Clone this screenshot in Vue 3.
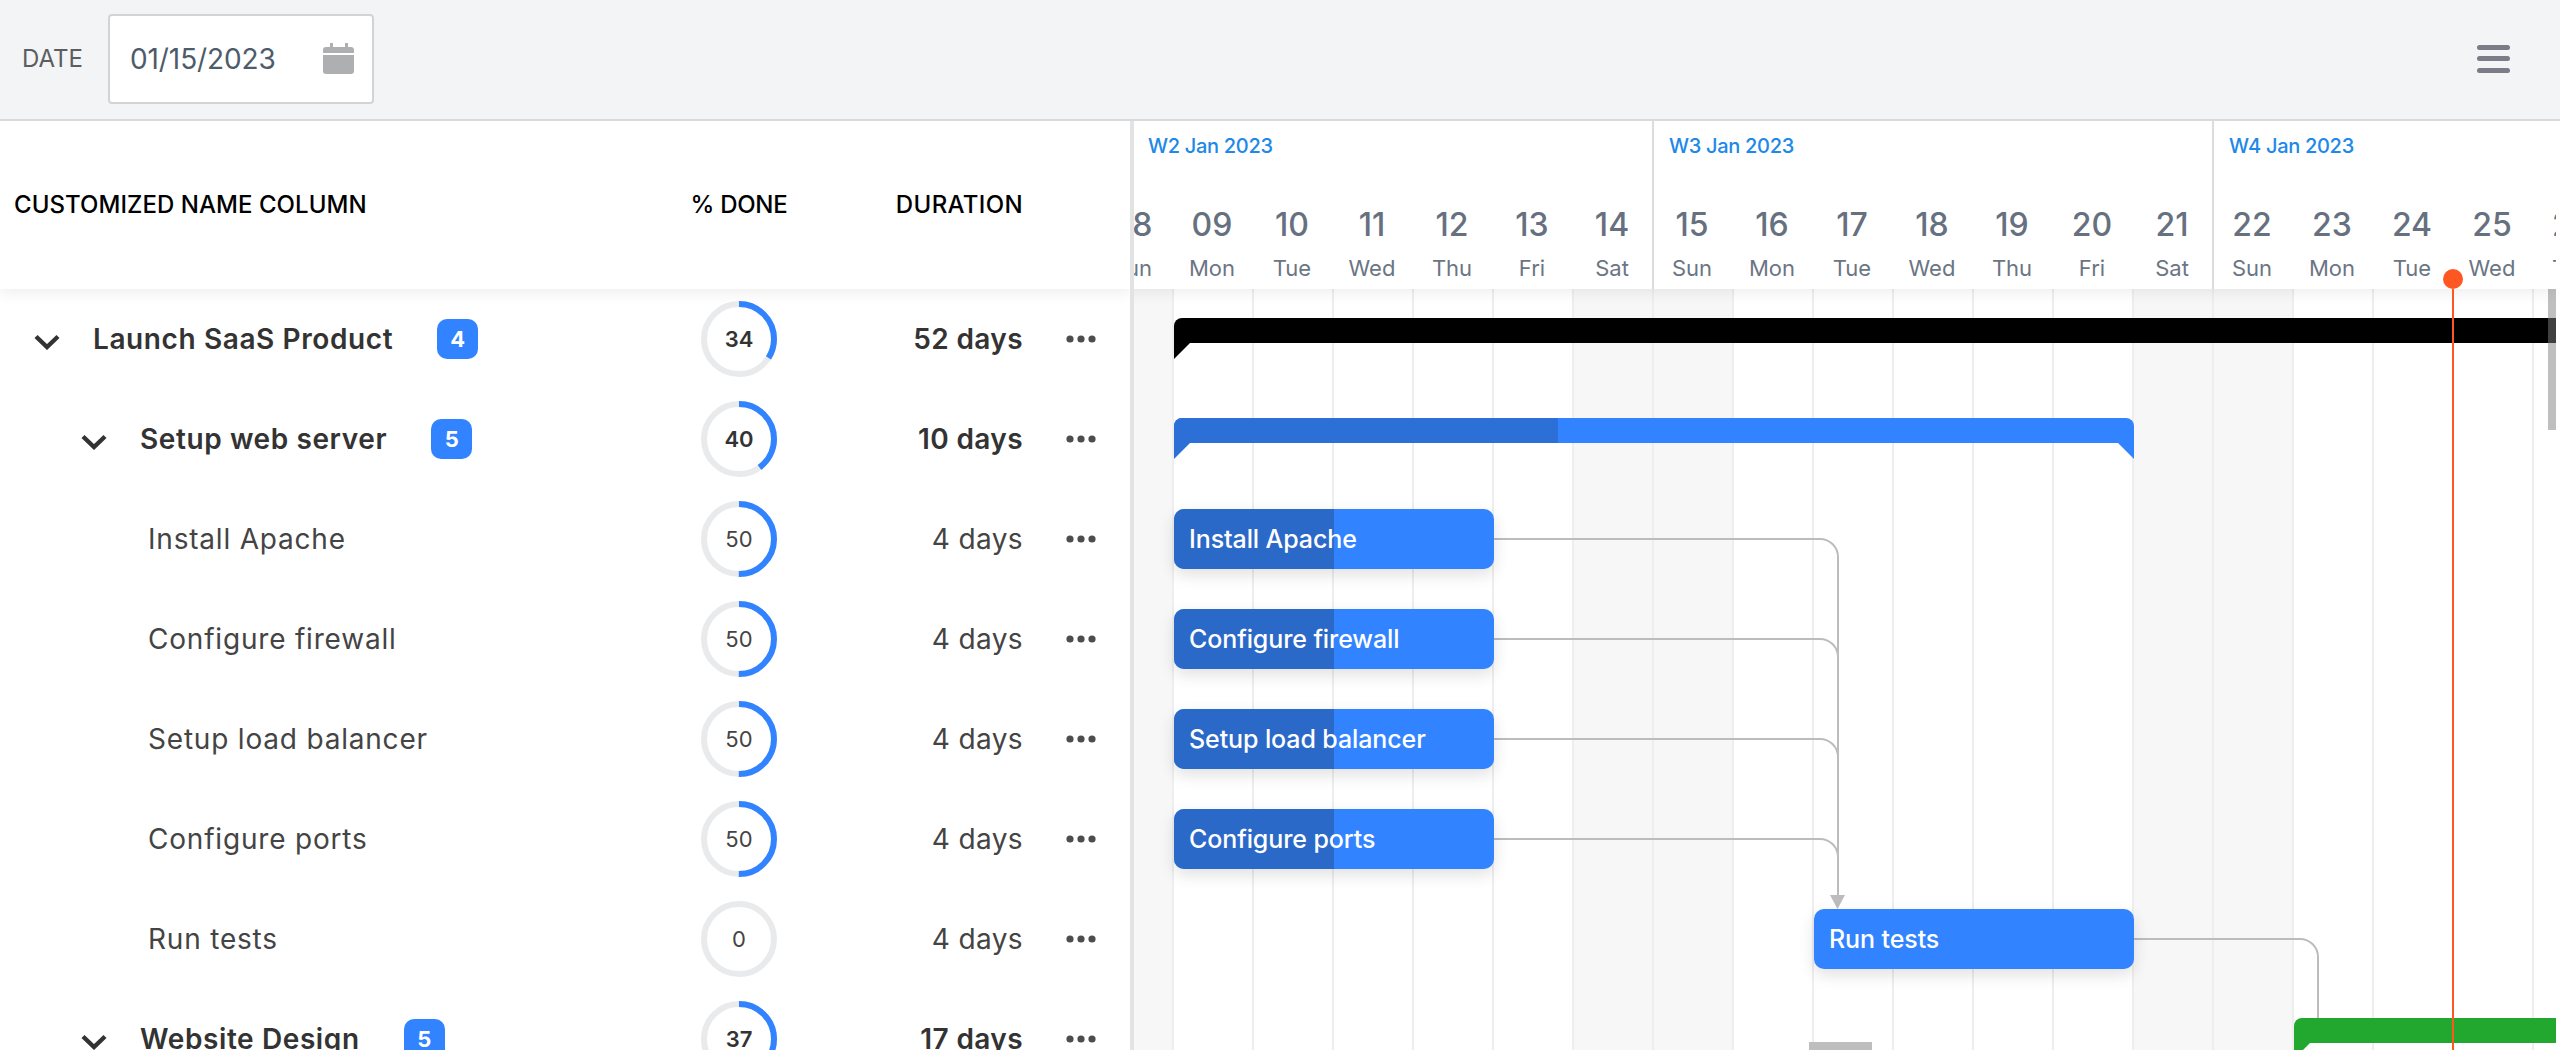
<script setup>
const rows = [
  { name: 'Launch SaaS Product', depth: 0, badge: 4, pct: 34, dur: '52 days' },
  { name: 'Setup web server', depth: 1, badge: 5, pct: 40, dur: '10 days' },
  { name: 'Install Apache', depth: 2, pct: 50, dur: '4 days' },
  { name: 'Configure firewall', depth: 2, pct: 50, dur: '4 days' },
  { name: 'Setup load balancer', depth: 2, pct: 50, dur: '4 days' },
  { name: 'Configure ports', depth: 2, pct: 50, dur: '4 days' },
  { name: 'Run tests', depth: 2, pct: 0, dur: '4 days' },
  { name: 'Website Design', depth: 1, badge: 5, pct: 37, dur: '17 days' }
]
const C = 2 * Math.PI * 35
const dash = (p) => `${(C * p) / 100} ${C}`

const weeks = [
  { label: 'W2 Jan 2023', cls: 'first', days: [['08','Sun'],['09','Mon'],['10','Tue'],['11','Wed'],['12','Thu'],['13','Fri'],['14','Sat']] },
  { label: 'W3 Jan 2023', cls: '', days: [['15','Sun'],['16','Mon'],['17','Tue'],['18','Wed'],['19','Thu'],['20','Fri'],['21','Sat']] },
  { label: 'W4 Jan 2023', cls: 'last', days: [['22','Sun'],['23','Mon'],['24','Tue'],['25','Wed'],['26','Thu']] }
]
const cols = weeks.flatMap((w) => w.days.map((d) => d[1]))

const tasks = [
  { name: 'Install Apache', x: 40, y: 220, w: 320, done: 160 },
  { name: 'Configure firewall', x: 40, y: 320, w: 320, done: 160 },
  { name: 'Setup load balancer', x: 40, y: 420, w: 320, done: 160 },
  { name: 'Configure ports', x: 40, y: 520, w: 320, done: 160 },
  { name: 'Run tests', x: 680, y: 620, w: 320, done: 0 }
]
const links = [
  'M360 250H686A18 18 0 0 1 704 268V606',
  'M360 350H686A18 18 0 0 1 704 368V606',
  'M360 450H686A18 18 0 0 1 704 468V606',
  'M360 550H686A18 18 0 0 1 704 568V606',
  'M1000 650H1166A18 18 0 0 1 1184 668V729'
]
</script>

<template>
  <div class="app">
    <header class="toolbar">
      <span class="date-label">DATE</span>
      <div class="date-input">
        <span class="date-value">01/15/2023</span>
        <svg class="cal" width="31" height="31" viewBox="0 0 31 31">
          <path fill="#aeafb1" d="M7 0h3v4h12V0h3v4h3a3 3 0 0 1 3 3v3H0V7a3 3 0 0 1 3-3h4zM0 12h31v16a3 3 0 0 1-3 3H3a3 3 0 0 1-3-3z" />
        </svg>
      </div>
      <div class="burger"><i></i><i></i><i></i></div>
    </header>

    <div class="main">
      <section class="left">
        <div class="left-head">
          <div class="hname">CUSTOMIZED NAME COLUMN</div>
          <div class="hdone">% DONE</div>
          <div class="hdur">DURATION</div>
        </div>
        <div v-for="r in rows" :key="r.name" class="row" :class="{ parent: r.depth < 2 }">
          <div class="name" :class="'d' + r.depth">
            <svg v-if="r.depth < 2" class="chev" width="26" height="16" viewBox="0 0 26 16">
              <path d="M2 2.5 13 13 24 2.5" fill="none" stroke="#333" stroke-width="4.4" />
            </svg>
            <span class="label">{{ r.name }}</span>
            <span v-if="r.badge" class="badge">{{ r.badge }}</span>
          </div>
          <div class="ring">
            <svg width="76" height="76" viewBox="0 0 76 76">
              <circle cx="38" cy="38" r="35" fill="none" stroke="#e9eaec" stroke-width="6" />
              <circle cx="38" cy="38" r="35" fill="none" stroke="#3183ff" stroke-width="6" :stroke-dasharray="dash(r.pct)" transform="rotate(-90 38 38)" />
            </svg>
            <span class="pct">{{ r.pct }}</span>
          </div>
          <div class="dur">{{ r.dur }}</div>
          <div class="menu">
            <svg width="30" height="10" viewBox="0 0 30 10">
              <circle cx="4" cy="5" r="3.6" fill="#4d4d4d" />
              <circle cx="15" cy="5" r="3.6" fill="#4d4d4d" />
              <circle cx="26" cy="5" r="3.6" fill="#4d4d4d" />
            </svg>
          </div>
        </div>
      </section>

      <div class="splitter"></div>

      <section class="timeline">
        <div class="time-head">
          <div v-for="w in weeks" :key="w.label" class="week" :class="w.cls">
            <div class="week-label">{{ w.label }}</div>
            <div class="days">
              <div v-for="d in w.days" :key="d[0]" class="day">
                <div class="num">{{ d[0] }}</div>
                <div class="dname">{{ d[1] }}</div>
              </div>
            </div>
          </div>
        </div>

        <div class="canvas">
          <div class="grid">
            <div v-for="(c, i) in cols" :key="i" class="col" :class="{ off: c === 'Sun' || c === 'Sat' }"></div>
          </div>

          <svg class="links" width="1422" height="761" viewBox="0 0 1422 761">
            <path v-for="l in links" :key="l" :d="l" fill="none" stroke="#bcbcbc" stroke-width="2" />
            <polygon points="696,606 711,606 703.5,620" fill="#bcbcbc" />
          </svg>

          <div class="summary black"></div>
          <div class="summary blue"><div class="summary-done"></div></div>
          <div class="summary green"></div>

          <div v-for="t in tasks" :key="t.name" class="task" :style="{ top: t.y + 'px', left: t.x + 'px', width: t.w + 'px' }">
            <div class="task-done" :style="{ width: t.done + 'px' }"></div>
            <span class="task-name">{{ t.name }}</span>
          </div>

          <div class="milestone"></div>
          <div class="scrollbar"></div>
        </div>

        <div class="today"><i></i></div>
      </section>
    </div>
  </div>
</template>

<style scoped>
.app {
  width: 2560px;
  height: 1050px;
  overflow: hidden;
  display: flex;
  flex-direction: column;
  font-family: Inter, "Noto Sans", sans-serif;
  background: #fff;
  color: #333;
}
.toolbar {
  height: 121px;
  box-sizing: border-box;
  flex: none;
  display: flex;
  align-items: center;
  padding: 0 50px 2px 22px;
  background: #f3f4f6;
  border-bottom: 2px solid #d9dadd;
}
.date-label {
  font-size: 24px;
  color: #5b5d60;
  width: 86px;
}
.date-input {
  width: 266px;
  height: 90px;
  box-sizing: border-box;
  background: #fff;
  border: 2px solid #d2d3d6;
  border-radius: 4px;
  display: flex;
  align-items: flex-start;
  padding: 25px 18px 0 20px;
  justify-content: space-between;
}
.date-value {
  font-size: 28px;
  line-height: 36px;
  color: #4d5b6b;
  letter-spacing: -0.1px;
}
.cal {
  margin-top: 2px;
}
.burger {
  margin-left: auto;
  width: 33px;
  display: flex;
  flex-direction: column;
  gap: 6.5px;
  margin-top: 0;
}
.burger i {
  display: block;
  height: 5px;
  border-radius: 2.5px;
  background: #7b7c87;
}
.main {
  flex: 1;
  min-height: 0;
  display: flex;
  padding-right: 4px;
}
.left {
  width: 1130px;
  flex: none;
  overflow: hidden;
}
.left-head {
  height: 168px;
  box-sizing: border-box;
  padding-bottom: 2px;
  display: grid;
  grid-template-columns: 659px 160px 204px;
  align-items: center;
  font-size: 24px;
  font-weight: 500;
  color: #000;
  box-shadow: 0 4px 14px rgba(0, 0, 0, 0.07);
  position: relative;
}
.hname {
  padding-left: 14px;
  letter-spacing: 0.05px;
}
.hdone {
  text-align: center;
  letter-spacing: -0.3px;
}
.hdur {
  text-align: right;
  letter-spacing: 0.35px;
}
.row {
  height: 100px;
  display: grid;
  grid-template-columns: 659px 160px 204px 107px;
  align-items: center;
  font-size: 28px;
  color: #444;
}
.row.parent {
  font-weight: 600;
  color: #333;
}
.label {
  letter-spacing: 0.8px;
}
.row.parent .label {
  letter-spacing: 0.6px;
}
.name {
  display: flex;
  align-items: center;
}
.name.d0 {
  padding-left: 34px;
}
.name.d1 {
  padding-left: 81px;
}
.name.d2 {
  padding-left: 148px;
}
.chev {
  flex: none;
  margin-right: 33px;
  margin-top: 5px;
}
.badge {
  margin-left: 44px;
  width: 41px;
  height: 40px;
  border-radius: 10px;
  background: #3183ff;
  color: #fff;
  font-size: 22px;
  font-weight: 700;
  display: flex;
  align-items: center;
  justify-content: center;
}
.ring {
  justify-self: center;
  display: grid;
  width: 76px;
  height: 76px;
}
.ring svg,
.pct {
  grid-area: 1 / 1;
}
.pct {
  align-self: center;
  justify-self: center;
  font-size: 22px;
}
.row.parent .pct {
  font-weight: 600;
}
.dur {
  text-align: right;
  letter-spacing: 0.4px;
}
.menu {
  display: flex;
  justify-content: flex-start;
  padding-left: 43px;
}
.menu svg {
  display: block;
}
.splitter {
  width: 4px;
  flex: none;
  background: #e2e3e5;
  position: relative;
  z-index: 3;
}
.timeline {
  flex: 1;
  min-width: 0;
  overflow: hidden;
  position: relative;
  display: flex;
  flex-direction: column;
}
.time-head {
  height: 168px;
  flex: none;
  display: flex;
  margin-left: -40px;
  background: #fff;
  position: relative;
  z-index: 2;
  box-shadow: 0 4px 14px rgba(0, 0, 0, 0.07);
}
.week {
  flex: none;
  box-sizing: border-box;
  width: 560px;
  border-right: 2px solid #dcdcdc;
}
.week.last {
  width: 400px;
  border-right: 0;
}
.week-label {
  height: 50px;
  line-height: 50px;
  padding-left: 15px;
  font-size: 20px;
  font-weight: 500;
  color: #2088e8;
  white-space: nowrap;
  letter-spacing: -0.3px;
}
.week.first .week-label {
  padding-left: 54px;
}
.days {
  display: flex;
  padding-top: 34px;
}
.day {
  width: 80px;
  flex: none;
  box-sizing: border-box;
  padding-right: 4px;
  text-align: center;
}
.num {
  font-size: 32px;
  line-height: 40px;
  font-weight: 500;
  color: #66707f;
}
.dname {
  font-size: 22px;
  line-height: 30px;
  margin-top: 8px;
  color: #6b7584;
}
.canvas {
  flex: 1;
  position: relative;
  overflow: hidden;
}
.grid {
  display: flex;
  height: 100%;
  margin-left: -40px;
}
.col {
  flex: none;
  width: 80px;
  box-sizing: border-box;
  border-right: 2px solid #eeeeee;
}
.col.off {
  background: #f7f7f7;
}
.links {
  position: absolute;
  left: 0;
  top: 0;
}
.summary {
  position: absolute;
  height: 25px;
  border-radius: 8px 8px 0 0;
}
.summary::before {
  content: "";
  position: absolute;
  left: 0;
  top: 25px;
  border-top: 16px solid var(--bar);
  border-right: 16px solid transparent;
}
.summary::after {
  content: "";
  position: absolute;
  right: 0;
  top: 25px;
  border-top: 16px solid var(--bar);
  border-left: 16px solid transparent;
}
.summary.black {
  --bar: #000;
  left: 40px;
  top: 29px;
  width: 1500px;
  background: #000;
}
.summary.blue {
  --bar: #3183ff;
  left: 40px;
  top: 129px;
  width: 960px;
  background: #3183ff;
  overflow: visible;
}
.summary.blue::before {
  border-top-color: #2c6fd6;
}
.summary-done {
  width: 384px;
  height: 100%;
  background: #2c6fd6;
  border-radius: 8px 0 0 0;
}
.summary.green {
  --bar: #22a82e;
  left: 1160px;
  top: 729px;
  width: 500px;
  background: #22a82e;
}
.task {
  position: absolute;
  height: 60px;
  border-radius: 10px;
  background: #3183ff;
  overflow: visible;
  display: flex;
  align-items: center;
  box-shadow: 0 6px 16px rgba(0, 0, 0, 0.12);
}
.task-done {
  position: absolute;
  left: 0;
  top: 0;
  bottom: 0;
  background: #2b69c9;
  border-radius: 10px 0 0 10px;
}
.task-name {
  position: relative;
  padding-left: 15px;
  font-size: 25px;
  font-weight: 500;
  color: #fff;
  white-space: nowrap;
  letter-spacing: -0.1px;
}
.milestone {
  position: absolute;
  left: 675px;
  top: 753px;
  width: 63px;
  height: 8px;
  background: #bebebe;
}
.scrollbar {
  position: absolute;
  right: 0;
  top: 0;
  width: 8px;
  height: 141px;
  background: rgba(128, 128, 128, 0.5);
}
.today {
  position: absolute;
  left: 1318px;
  top: 168px;
  bottom: 0;
  width: 2px;
  background: #ff5722;
  z-index: 4;
}
.today i {
  position: absolute;
  left: -9px;
  top: -20px;
  width: 20px;
  height: 20px;
  border-radius: 50%;
  background: #ff5722;
}
</style>
